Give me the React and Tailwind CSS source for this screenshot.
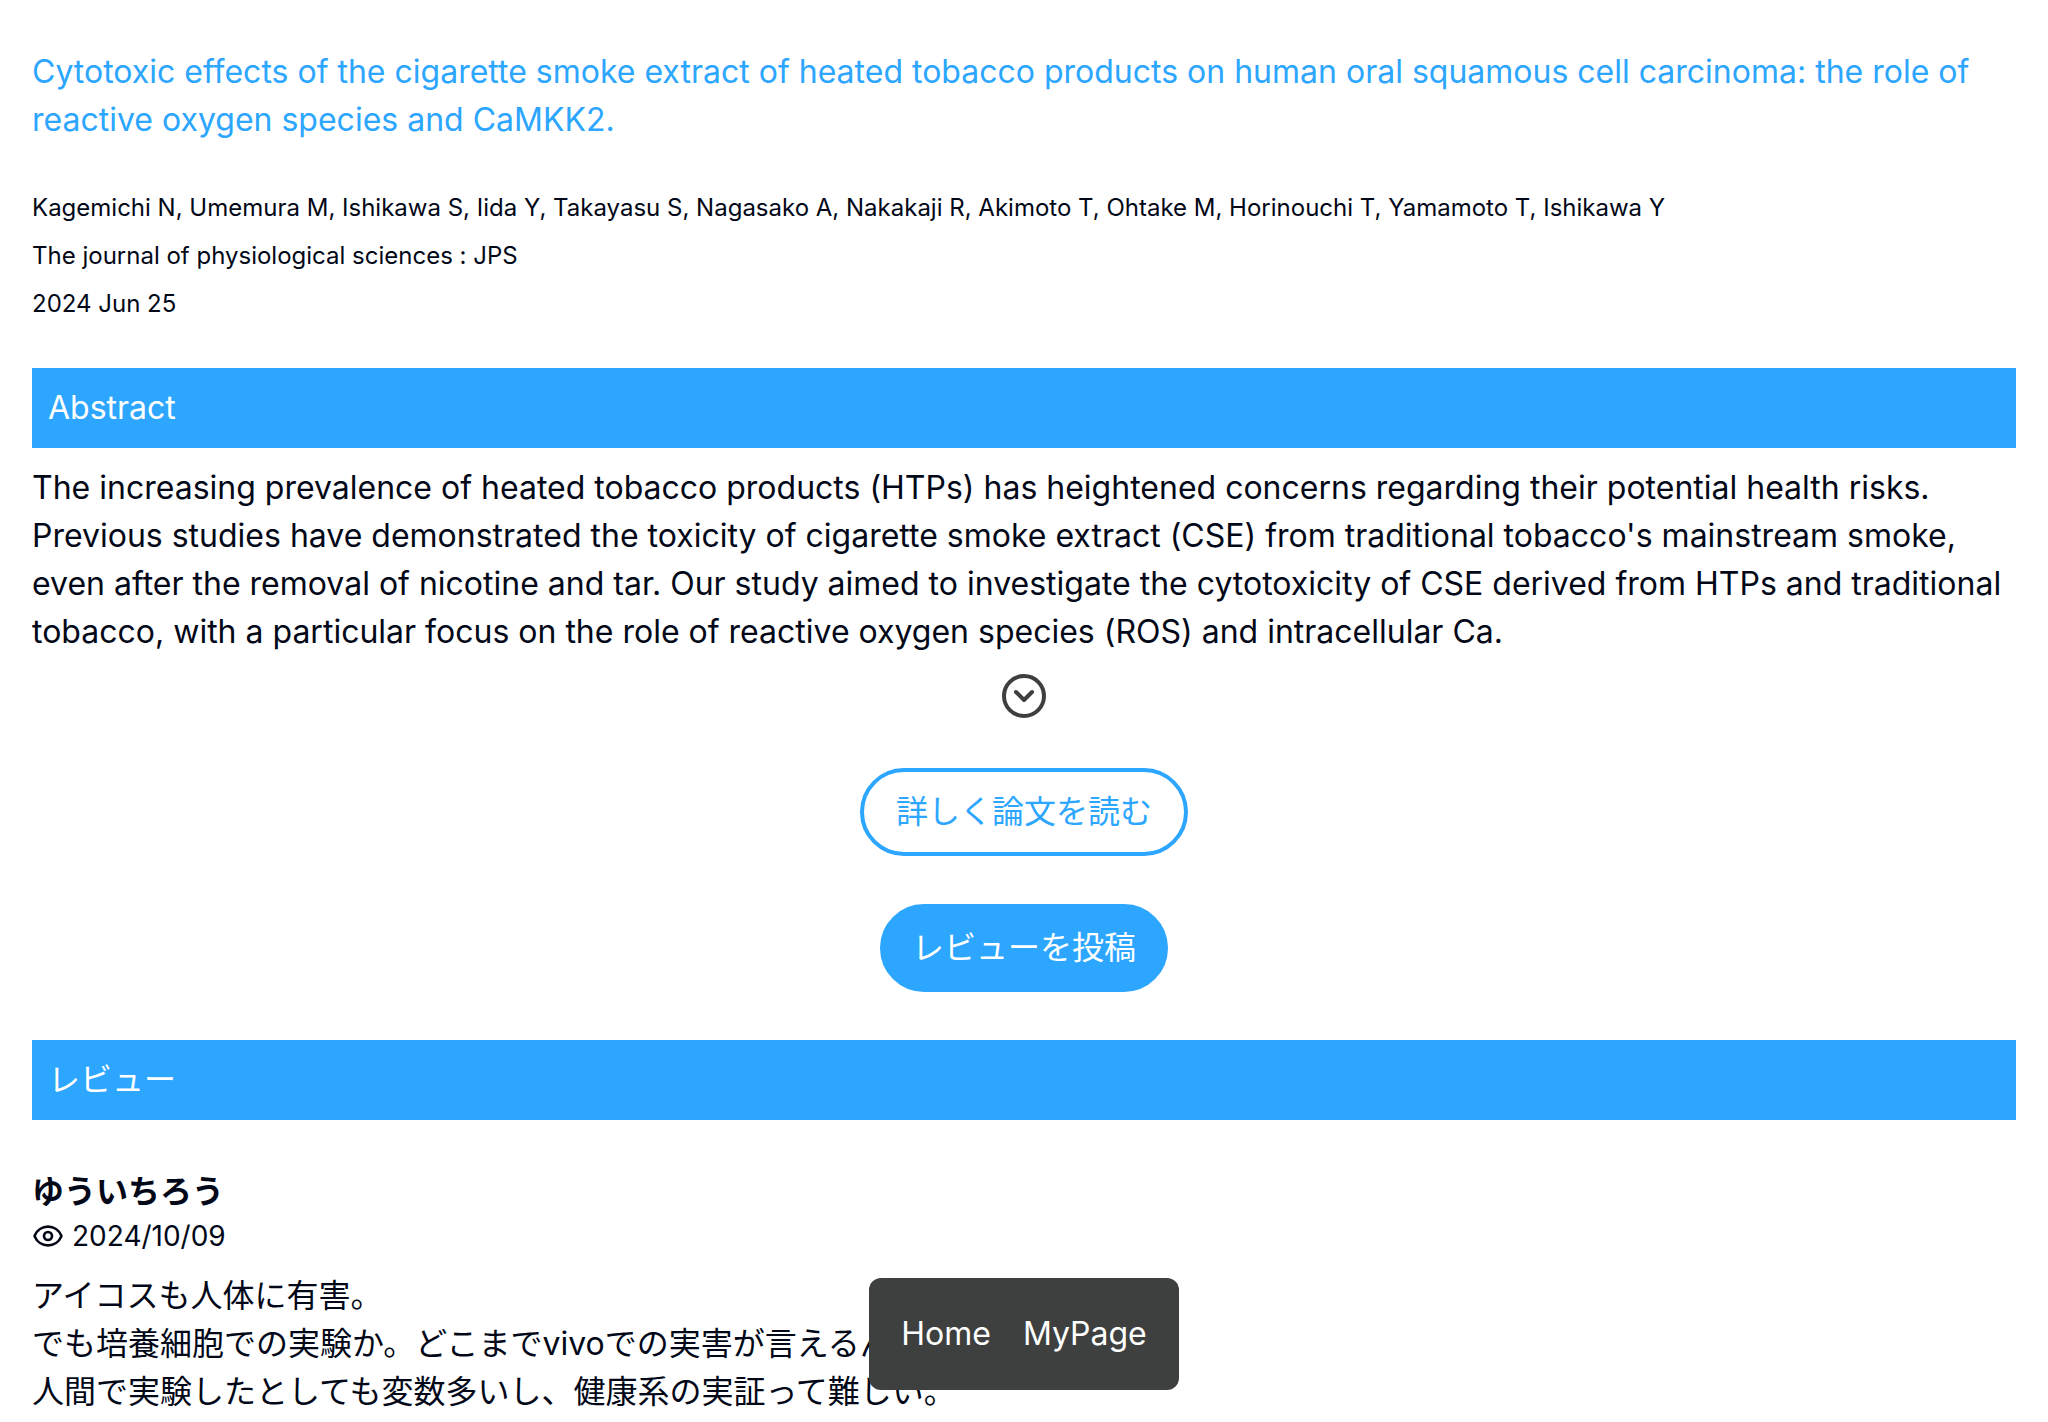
import React, { useState } from 'react';
import { CircleChevronDown, Eye } from 'lucide-react';

const paper = {
  title:
    'Cytotoxic effects of the cigarette smoke extract of heated tobacco products on human oral squamous cell carcinoma: the role of reactive oxygen species and CaMKK2.',
  authors:
    'Kagemichi N, Umemura M, Ishikawa S, Iida Y, Takayasu S, Nagasako A, Nakakaji R, Akimoto T, Ohtake M, Horinouchi T, Yamamoto T, Ishikawa Y',
  journal: 'The journal of physiological sciences : JPS',
  date: '2024 Jun 25',
  abstract:
    "The increasing prevalence of heated tobacco products (HTPs) has heightened concerns regarding their potential health risks. Previous studies have demonstrated the toxicity of cigarette smoke extract (CSE) from traditional tobacco's mainstream smoke, even after the removal of nicotine and tar. Our study aimed to investigate the cytotoxicity of CSE derived from HTPs and traditional tobacco, with a particular focus on the role of reactive oxygen species (ROS) and intracellular Ca.",
};

const reviews = [
  {
    id: 1,
    name: 'ゆういちろう',
    date: '2024/10/09',
    lines: [
      'アイコスも人体に有害。',
      'でも培養細胞での実験か。どこまでvivoでの実害が言えるんだろうか。',
      '人間で実験したとしても変数多いし、健康系の実証って難しい。',
    ],
  },
];

function SectionTitle({ children }) {
  return <h2 className="bg-[#2ca6ff] p-4 text-white">{children}</h2>;
}

function Review({ review }) {
  return (
    <article className="mt-12">
      <h3 className="font-bold">{review.name}</h3>
      <div className="flex items-center gap-2 text-[28px] leading-10">
        <Eye size={32} aria-hidden="true" />
        <time>{review.date}</time>
      </div>
      <div className="mt-4">
        {review.lines.map((line) => (
          <p key={line}>{line}</p>
        ))}
      </div>
    </article>
  );
}

// Menú flotante fijo en la parte inferior
function FloatingNav() {
  return (
    <nav className="fixed inset-x-0 bottom-8 flex justify-center">
      <div className="flex gap-8 rounded-xl bg-[#3e403f] p-8 text-white">
        <a href="#home">Home</a>
        <a href="#mypage">MyPage</a>
      </div>
    </nav>
  );
}

export default function App() {
  const [expanded, setExpanded] = useState(false);

  return (
    <div className="min-h-screen bg-white font-['Inter','Noto_Sans_CJK_JP',sans-serif] text-[32px] leading-[48px] text-[#020817] [font-variant-ligatures:none]">
      <main className="px-8 pt-12">
        <h1>
          <a href="#paper" className="text-[#2ca6ff]">{paper.title}</a>
        </h1>

        <div className="my-10 text-2xl leading-[48px]">
          <p>{paper.authors}</p>
          <p>{paper.journal}</p>
          <p>{paper.date}</p>
        </div>

        <SectionTitle>Abstract</SectionTitle>
        <p className={expanded ? 'mt-4' : 'mt-4 line-clamp-4'}>{paper.abstract}</p>

        <div className="mt-4 mb-12 flex flex-col items-center gap-12">
          <button
            type="button"
            aria-label="もっと見る"
            aria-expanded={expanded}
            onClick={() => setExpanded(!expanded)}
            className="text-[#3e403f]"
          >
            <CircleChevronDown size={48} />
          </button>
          <a href="#paper" className="rounded-full border-4 border-[#2ca6ff] px-8 py-4 text-[#2ca6ff]">
            詳しく論文を読む
          </a>
          <button type="button" className="rounded-full border-4 border-[#2ca6ff] bg-[#2ca6ff] px-7 py-4 text-white">
            レビューを投稿
          </button>
        </div>

        <SectionTitle>レビュー</SectionTitle>
        {reviews.map((review) => (
          <Review key={review.id} review={review} />
        ))}
      </main>

      <FloatingNav />
    </div>
  );
}
